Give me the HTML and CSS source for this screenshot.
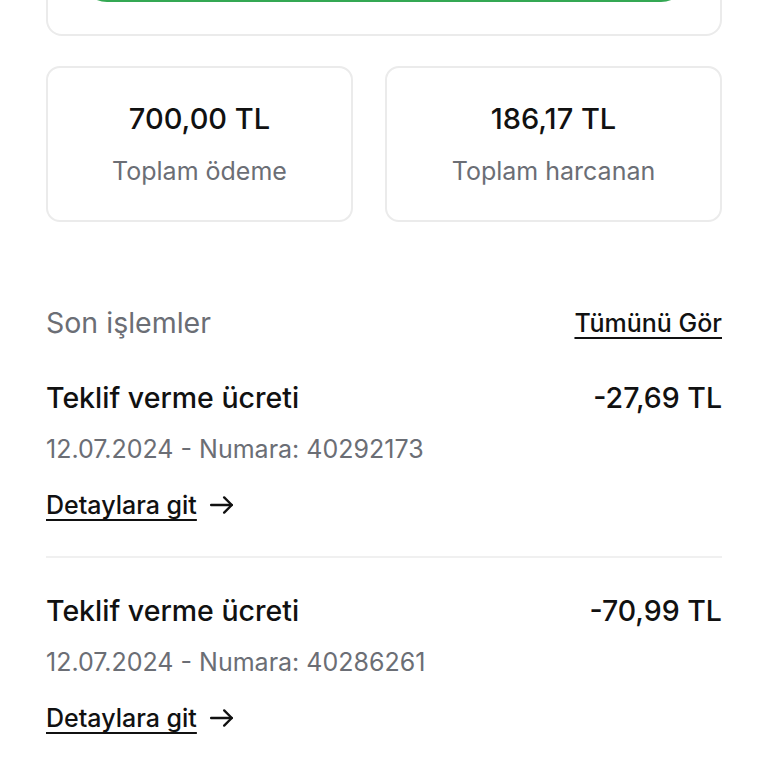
FILE: index.html
```html
<!DOCTYPE html>
<html lang="tr">
<head>
    <meta charset="UTF-8">
    <meta name="viewport" content="width=device-width, initial-scale=1.0">
    <title>Cüzdan</title>
    <link rel="stylesheet" href="styles.css">
</head>
<body>
    <div class="page">
        <div class="top-card">
            <div class="green-btn"></div>
        </div>

        <div class="stats">
            <div class="stat">
                <div class="stat-value">700,00 TL</div>
                <div class="stat-label">Toplam ödeme</div>
            </div>
            <div class="stat">
                <div class="stat-value">186,17 TL</div>
                <div class="stat-label">Toplam harcanan</div>
            </div>
        </div>

        <div class="section-head">
            <span class="section-title">Son işlemler</span>
            <a class="see-all" href="#">Tümünü Gör</a>
        </div>

        <div class="tx">
            <div class="tx-row">
                <span class="tx-title">Teklif verme ücreti</span>
                <span class="tx-amount">-27,69 TL</span>
            </div>
            <div class="tx-meta">12.07.2024 - Numara: 40292173</div>
            <a class="tx-link" href="#"><span>Detaylara git</span>
                <svg width="26" height="26" viewBox="0 0 24 24" fill="none" stroke="#111" stroke-width="2.2" stroke-linecap="round" stroke-linejoin="round"><path d="M2 12h19"/><path d="M14 5l7 7-7 7"/></svg>
            </a>
        </div>
        <div class="tx">
            <div class="tx-row">
                <span class="tx-title">Teklif verme ücreti</span>
                <span class="tx-amount">-70,99 TL</span>
            </div>
            <div class="tx-meta">12.07.2024 - Numara: 40286261</div>
            <a class="tx-link" href="#"><span>Detaylara git</span>
                <svg width="26" height="26" viewBox="0 0 24 24" fill="none" stroke="#111" stroke-width="2.2" stroke-linecap="round" stroke-linejoin="round"><path d="M2 12h19"/><path d="M14 5l7 7-7 7"/></svg>
            </a>
        </div>
    </div>
</body>
</html>
```

FILE: styles.css
```css
body {
    margin: 0;
    background-color: #ffffff;
    font-family: Inter, "Open Sans", Arial, sans-serif;
    color: #111111;
    overflow: hidden;
}
.page {
    padding: 0 46px;
}
.top-card {
    margin-top: -90px;
    padding: 36px 32px 32px;
    border: 2px solid #ebebeb;
    border-radius: 16px;
}
.green-btn {
    height: 54px;
    border-radius: 27px;
    background-color: #34a853;
}
.stats {
    display: grid;
    grid-template-columns: 307px 1fr;
    gap: 32px;
    margin-top: 30px;
}
.stat {
    height: 152px;
    border: 2px solid #ebebeb;
    border-radius: 14px;
    display: flex;
    flex-direction: column;
    align-items: center;
    justify-content: center;
    gap: 20px;
}
.stat-value {
    font-size: 29px;
    line-height: 34px;
    font-weight: 500;
}
.stat-label {
    font-size: 25px;
    line-height: 30px;
    color: #6b6e75;
}
.section-head {
    display: flex;
    justify-content: space-between;
    align-items: center;
    margin-top: 84px;
    line-height: 34px;
}
.section-title {
    font-size: 28.5px;
    color: #6b6e75;
}
.see-all {
    font-size: 25px;
    font-weight: 500;
    color: #111111;
    text-decoration: underline;
    text-decoration-thickness: 1.5px;
    text-underline-offset: 5px;
}
.tx {
    padding: 41px 0 36px;
    border-bottom: 2px solid #f0f0f0;
}
.tx + .tx {
    padding-top: 36px;
}
.tx:last-child {
    border-bottom: none;
}
.tx-row {
    display: flex;
    justify-content: space-between;
    align-items: center;
    line-height: 34px;
}
.tx-title, .tx-amount {
    font-size: 28.5px;
    font-weight: 500;
}
.tx-meta {
    margin-top: 19px;
    font-size: 25px;
    line-height: 30px;
    color: #6b6e75;
}
.tx-link {
    display: flex;
    width: max-content;
    align-items: center;
    gap: 12px;
    margin-top: 26px;
    font-size: 25px;
    line-height: 30px;
    font-weight: 500;
    color: #111111;
    text-decoration: none;
}
.tx-link span {
    text-decoration: underline;
    text-decoration-thickness: 1.5px;
    text-underline-offset: 5px;
}
```
